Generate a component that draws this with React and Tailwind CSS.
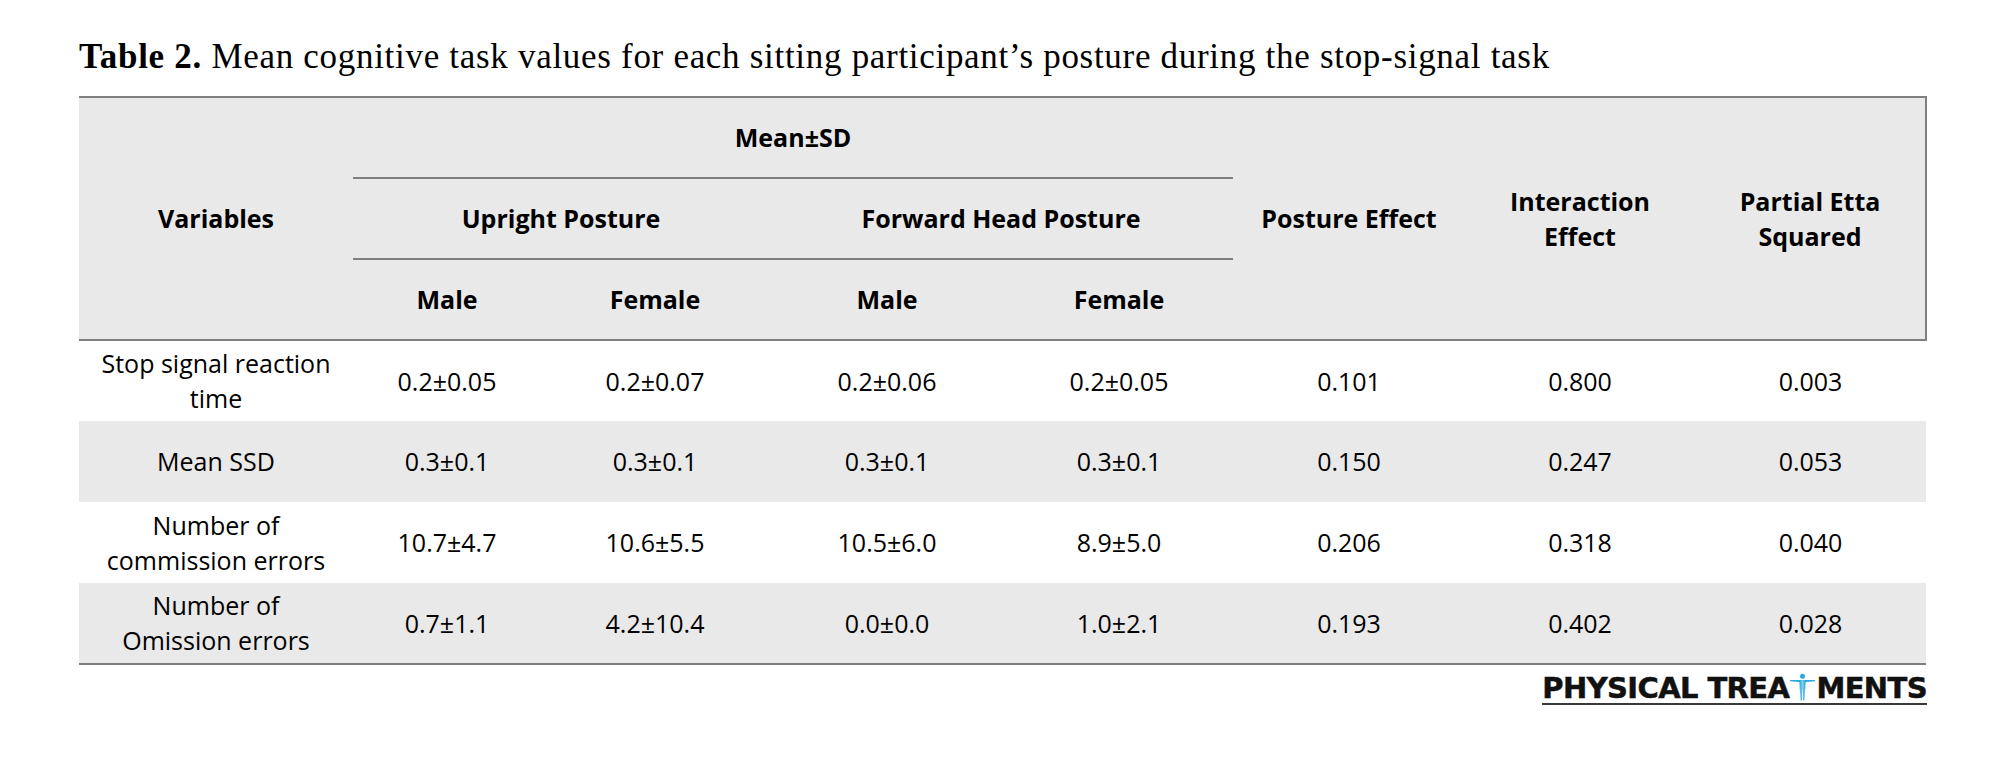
import React from 'react';

const rows = [
  { label: ['Stop signal reaction', 'time'], values: ['0.2±0.05', '0.2±0.07', '0.2±0.06', '0.2±0.05', '0.101', '0.800', '0.003'] },
  { label: ['Mean SSD'], values: ['0.3±0.1', '0.3±0.1', '0.3±0.1', '0.3±0.1', '0.150', '0.247', '0.053'] },
  { label: ['Number of', 'commission errors'], values: ['10.7±4.7', '10.6±5.5', '10.5±6.0', '8.9±5.0', '0.206', '0.318', '0.040'] },
  { label: ['Number of', 'Omission errors'], values: ['0.7±1.1', '4.2±10.4', '0.0±0.0', '1.0±2.1', '0.193', '0.402', '0.028'] },
];

const colWidths = [274, 188, 228, 236, 228, 232, 230, 231];

const Figure = () => (
  <svg width="25" height="28" viewBox="0 0 24 26" className="inline-block align-[-3px] mx-[1px]">
    <defs>
      <linearGradient id="skin" x1="0" y1="0" x2="1" y2="0">
        <stop offset="0" stopColor="#1e9fd8" />
        <stop offset="0.5" stopColor="#7fd3f2" />
        <stop offset="1" stopColor="#1e9fd8" />
      </linearGradient>
    </defs>
    <circle cx="12" cy="2.6" r="2.4" fill="#2aa8e0" />
    <path d="M0 6.2 L24 6.2 L24 7.4 L15 8.2 L8.8 8.2 L0 7.4 Z" fill="#2aa8e0" />
    <path d="M9 6.4 L15 6.4 L14.6 15 L9.4 15 Z" fill="url(#skin)" />
    <path d="M9.4 14.5 L11.7 14.5 L11.5 26 L10.2 26 Z" fill="url(#skin)" />
    <path d="M12.3 14.5 L14.6 14.5 L13.8 26 L12.5 26 Z" fill="url(#skin)" />
  </svg>
);

const App = () => {
  return (
    <div className="w-[2000px] h-[769px] bg-white pl-[79px] text-black">
      <div className="h-[96px] pt-[37px]">
        <p className="font-['Liberation_Serif',serif] text-[35px] leading-[40px] tracking-[0.7px] whitespace-nowrap">
          <span className="font-bold">Table 2.</span> Mean cognitive task values for each sitting participant’s posture during the stop-signal task
        </p>
      </div>

      <table className="w-[1847px] table-fixed border-collapse font-['Open_Sans',sans-serif] text-[25px] leading-[35px] text-center">
        <colgroup>
          {colWidths.map((w, i) => (
            <col key={i} style={{ width: w }} />
          ))}
        </colgroup>
        <thead className="bg-[#e9e9e9] font-bold">
          <tr className="h-[81px] border-t-2 border-[#7f7f7f]">
            <th rowSpan={3} className="font-bold border-b-2 border-[#7f7f7f]">Variables</th>
            <th colSpan={4} className="font-bold border-b-2 border-[#7f7f7f]">Mean±SD</th>
            <th rowSpan={3} className="font-bold border-b-2 border-[#7f7f7f] whitespace-nowrap">Posture Effect</th>
            <th rowSpan={3} className="font-bold border-b-2 border-[#7f7f7f]">Interaction<br />Effect</th>
            <th rowSpan={3} className="font-bold border-b-2 border-r-2 border-[#7f7f7f]">Partial Etta<br />Squared</th>
          </tr>
          <tr className="h-[81px]">
            <th colSpan={2} className="font-bold border-b-2 border-[#7f7f7f]">Upright Posture</th>
            <th colSpan={2} className="font-bold border-b-2 border-[#7f7f7f]">Forward Head Posture</th>
          </tr>
          <tr className="h-[81px]">
            <th className="font-bold border-b-2 border-[#7f7f7f]">Male</th>
            <th className="font-bold border-b-2 border-[#7f7f7f]">Female</th>
            <th className="font-bold border-b-2 border-[#7f7f7f]">Male</th>
            <th className="font-bold border-b-2 border-[#7f7f7f]">Female</th>
          </tr>
        </thead>
        <tbody>
          {rows.map((row, i) => (
            <tr
              key={i}
              className={
                i === rows.length - 1
                  ? 'h-[81px] bg-[#e9e9e9] border-b-2 border-[#7f7f7f]'
                  : i % 2 === 1
                  ? 'h-[81px] bg-[#e9e9e9]'
                  : 'h-[81px] bg-white'
              }
            >
              <td className="whitespace-nowrap">
                {row.label.map((line, j) => (
                  <div key={j}>{line}</div>
                ))}
              </td>
              {row.values.map((v, j) => (
                <td key={j} className="whitespace-nowrap">{v}</td>
              ))}
            </tr>
          ))}
        </tbody>
      </table>

      <div className="w-[1848px] flex justify-end mt-[8px]">
        <div className="border-b-2 border-[#3a3a3a] font-['DejaVu_Sans',sans-serif] font-bold text-[29px] leading-[30px] tracking-[-0.6px] whitespace-nowrap text-[#111] [-webkit-text-stroke:0.5px_#111]">
          PHYSICAL TREA<Figure />MENTS
        </div>
      </div>
    </div>
  );
};

export default App;
